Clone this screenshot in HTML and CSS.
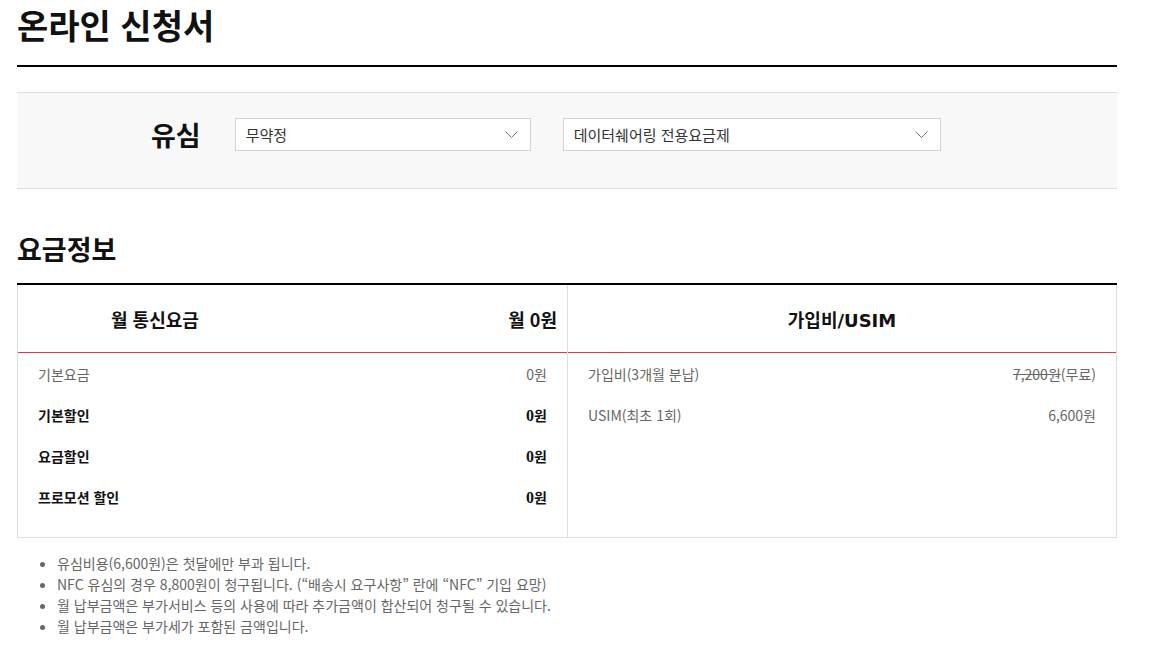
FILE: index.html
```html
<!DOCTYPE html>
<html lang="ko">
<head>
    <meta charset="UTF-8">
    <meta name="viewport" content="width=device-width, initial-scale=1.0">
    <title>온라인 신청서</title>
    <link rel="stylesheet" href="styles.css">
</head>
<body>
    <div id="container">
        <h1 class="page-title">온라인 신청서</h1>

        <div class="plan-box">
            <span class="plan-label">유심</span>
            <div class="select select-short">
                <span>무약정</span>
                <svg class="arrow" width="13" height="8" viewBox="0 0 13 8"><polyline points="0.5,0.5 6.5,6.5 12.5,0.5"></polyline></svg>
            </div>
            <div class="select select-long">
                <span>데이터쉐어링 전용요금제</span>
                <svg class="arrow" width="13" height="8" viewBox="0 0 13 8"><polyline points="0.5,0.5 6.5,6.5 12.5,0.5"></polyline></svg>
            </div>
        </div>

        <h2 class="section-title">요금정보</h2>

        <div class="fee-table">
            <div class="fee-col">
                <div class="fee-head head-split">
                    <span>월 통신요금</span>
                    <span>월 0원</span>
                </div>
                <div class="fee-body">
                    <div class="fee-row">
                        <span>기본요금</span>
                        <span>0원</span>
                    </div>
                    <div class="fee-row strong">
                        <span>기본할인</span>
                        <span class="amount"><b>0</b>원</span>
                    </div>
                    <div class="fee-row strong">
                        <span>요금할인</span>
                        <span class="amount"><b>0</b>원</span>
                    </div>
                    <div class="fee-row strong">
                        <span>프로모션 할인</span>
                        <span class="amount"><b>0</b>원</span>
                    </div>
                </div>
            </div>
            <div class="fee-col">
                <div class="fee-head head-center">
                    <span>가입비/USIM</span>
                </div>
                <div class="fee-body">
                    <div class="fee-row">
                        <span>가입비(3개월 분납)</span>
                        <span><del>7,200원</del>(무료)</span>
                    </div>
                    <div class="fee-row">
                        <span>USIM(최초 1회)</span>
                        <span>6,600원</span>
                    </div>
                </div>
            </div>
        </div>

        <ul class="notes">
            <li>유심비용(6,600원)은 첫달에만 부과 됩니다.</li>
            <li>NFC 유심의 경우 8,800원이 청구됩니다. (“배송시 요구사항” 란에 “NFC” 기입 요망)</li>
            <li>월 납부금액은 부가서비스 등의 사용에 따라 추가금액이 합산되어 청구될 수 있습니다.</li>
            <li>월 납부금액은 부가세가 포함된 금액입니다.</li>
        </ul>
    </div>
</body>
</html>
```

FILE: styles.css
```css
body{
    margin: 0;
    font-family: "Noto Sans CJK KR", "Noto Sans", sans-serif;
    color: #111;
    background-color: white;
}
#container{
    width: 1100px;
    padding: 0 17px;
}
.page-title{
    margin: 0;
    font-size: 34px;
    line-height: 50px;
    font-weight: 700;
    padding-bottom: 15px;
    border-bottom: 2px solid #000;
}

/* plan select box */
.plan-box{
    display: flex;
    align-items: center;
    margin-top: 25px;
    padding: 25px 0 37px 134px;
    background-color: #f8f8f8;
    border-top: 1px solid #ddd;
    border-bottom: 1px solid #ddd;
}
.plan-label{
    font-size: 27px;
    line-height: 33px;
    font-weight: 700;
    margin-right: 34px;
}
.select{
    display: flex;
    justify-content: space-between;
    align-items: center;
    box-sizing: border-box;
    height: 33px;
    padding: 0 10px 0 10px;
    background-color: white;
    border: 1px solid #d3d3d3;
    font-size: 15px;
    color: #333;
}
.select-short{
    width: 296px;
    margin-right: 32px;
}
.select-long{
    width: 378px;
}
.arrow{
    margin-right: 2px;
}
.arrow polyline{
    fill: none;
    stroke: #777;
    stroke-width: 1;
}

.section-title{
    margin: 0;
    margin-top: 40px;
    font-size: 27px;
    line-height: 40px;
    font-weight: 700;
}

/* fee table */
.fee-table{
    display: grid;
    grid-template-columns: 550px 550px;
    margin-top: 14px;
    border-top: 2px solid #000;
    border-bottom: 1px solid #ddd;
}
.fee-col{
    border-left: 1px solid #ddd;
}
.fee-col:last-child{
    border-right: 1px solid #ddd;
}
.fee-head{
    display: flex;
    align-items: center;
    height: 67px;
    border-bottom: 1px solid #f2333d;
    font-size: 18px;
    font-weight: 700;
}
.head-split{
    justify-content: space-between;
    padding: 0 10px 0 93px;
}
.head-center{
    justify-content: center;
    font-family: "DejaVu Sans", "Noto Sans CJK KR", sans-serif;
}
.fee-body{
    padding-bottom: 20px;
}
.fee-row{
    display: flex;
    justify-content: space-between;
    align-items: center;
    height: 41px;
    padding: 0 20px;
    font-size: 14px;
    color: #666;
}
.fee-row.strong{
    color: #111;
    font-weight: 700;
}
.amount b{
    font-family: "Liberation Serif", serif;
    font-size: 16px;
}
del{
    text-decoration: line-through;
}

.notes{
    margin: 15px 0 0;
    padding-left: 40px;
    font-size: 14px;
    line-height: 21px;
    color: #666;
}
```
